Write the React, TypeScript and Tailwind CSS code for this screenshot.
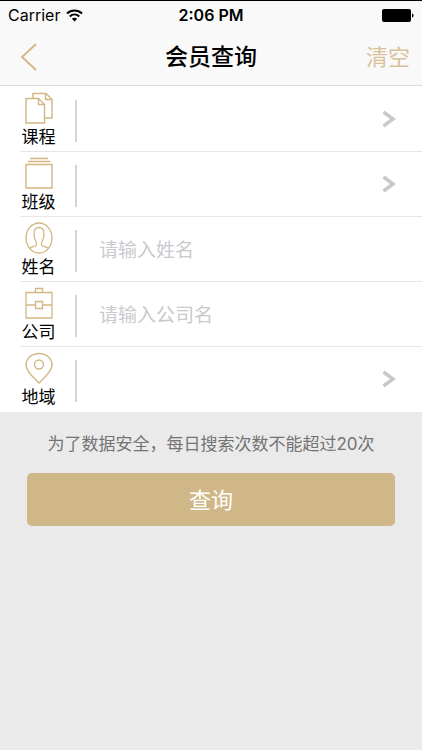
import { ReactNode, useState } from "react";

const GOLD = "#d2b684";

function CourseIcon() {
  return (
    <svg width="28" height="32" viewBox="0 0 28 32" fill="none" stroke={GOLD} strokeWidth="1.4">
      <path d="M8 6V1.5h13l6 6V26h-7.500" />
      <path d="M20.5 1.5v6h6.500" />
      <path d="M1 6.5h12.500l6 6V31H1z" />
      <path d="M13.500 6.500v6h6" />
    </svg>
  );
}

function ClassIcon() {
  return (
    <svg width="28" height="32" viewBox="0 0 28 32" fill="none" stroke={GOLD} strokeWidth="1.400">
      <path d="M5 1.500h18M3 4.500h22" />
      <path d="M1 7.500h26V31H1z" />
    </svg>
  );
}

function PersonIcon() {
  return (
    <svg width="28" height="32" viewBox="0 0 28 32" fill="none" stroke={GOLD} strokeWidth="1.300">
      <ellipse cx="14" cy="16" rx="13" ry="15" />
      <path d="M5 26.200c1.500-1.200 4.500-1.700 6-2.700.9-.8.600-2.500-.3-4.500C9.500 17 9 14.500 9 11.500 9 7.500 11 5.500 14 5.500s5 2 5 6c0 3-.5 5.500-1.700 7.500-.9 2-1.200 3.700-.3 4.500 1.500 1 4.500 1.500 6 2.700" />
    </svg>
  );
}

function CompanyIcon() {
  return (
    <svg width="28" height="32" viewBox="0 0 28 32" fill="none" stroke={GOLD} strokeWidth="1.300">
      <path d="M1 5.500h26V31H1z" />
      <path d="M10.500 5.500v-4h7v4" />
      <path d="M1 18h9.500M17.500 18H27" />
      <path d="M10.500 14.500h7v7h-7z" />
    </svg>
  );
}

function RegionIcon() {
  return (
    <svg width="28" height="32" viewBox="0 0 28 32" fill="none" stroke={GOLD} strokeWidth="1.400">
      <path d="M14 31C9 26 1 19.500 1 13.200 1 6.500 6.500 1.500 14 1.500s13 5 13 11.700C27 19.500 19 26 14 31z" />
      <circle cx="14" cy="12.500" r="4.500" />
    </svg>
  );
}

function Row({ id, label, icon, children, last }: { id: string; label: string; icon: ReactNode; children: ReactNode; last?: boolean }) {
  return (
    <div className="pl-5">
      <div className={`flex h-[65px] items-center border-b ${last ? "border-white" : "border-[#e6e6e6]"}`}>
        <label htmlFor={id} className="flex w-[37px] shrink-0 flex-col items-center gap-px pt-[3px] text-[17px] leading-6 text-black">
          {icon}
          {label}
        </label>
        <div className="ml-[18px] mt-1 h-[42px] w-0.5 shrink-0 bg-[#d5d5d5]" />
        {children}
      </div>
    </div>
  );
}

function Picker({ id }: { id: string }) {
  return (
    <div className="flex h-full min-w-0 flex-1 items-center pr-[26px]">
      <select id={id} className="h-full min-w-0 flex-1 appearance-none bg-transparent pl-[22px] text-[19px] outline-none">
        <option value=""></option>
      </select>
      <svg width="14" height="18" viewBox="0 0 14 18" fill="none" stroke="#c9c9c9" strokeWidth="3.500">
        <path d="M1.500 2l9.500 7-9.500 7" />
      </svg>
    </div>
  );
}

function TextField({ id, placeholder }: { id: string; placeholder: string }) {
  const [value, setValue] = useState("");
  return (
    <input
      id={id}
      type="text"
      value={value}
      onChange={(e) => setValue(e.target.value)}
      placeholder={placeholder}
      className="h-full min-w-0 flex-1 bg-transparent pl-[22px] pt-0.5 text-[19px] outline-none placeholder:text-[#c9c9ce]"
    />
  );
}

export default function App() {
  return (
    <div className="min-h-screen bg-[#eaeaea] font-['Inter','Noto_Sans_CJK_SC',sans-serif]">
      <header className="border-b border-t border-b-[#dcdcdc] border-t-black bg-[#f9f9f9]">
        <div className="grid h-7 grid-cols-[1fr_auto_1fr] items-center px-2 text-[16px] leading-5 text-black">
          <div className="flex items-center gap-1.5">
            <span>Carrier</span>
            <svg width="17" height="13" viewBox="0 0 17 13" fill="none" stroke="#000" strokeWidth="2">
              <path d="M1 4.500c4.300-4 10.700-4 15 0" />
              <path d="M3.700 7.400c2.800-2.500 6.800-2.500 9.600 0" />
              <path d="M5.800 9.700c1.600-1.400 3.800-1.400 5.400 0L8.500 12.500z" fill="#000" stroke="none" />
            </svg>
          </div>
          <span className="text-center font-semibold">2:06 PM</span>
          <svg className="justify-self-end" width="32" height="13" viewBox="0 0 32 13">
            <rect x="0" y="0" width="29" height="13" rx="2" fill="#000" />
            <path d="M30 4.500c2 .5 2 3.500 0 4z" fill="#000" />
          </svg>
        </div>
        <div className="grid h-14 grid-cols-[1fr_auto_1fr] items-center px-3">
          <button type="button" aria-label="返回" className="justify-self-start pl-2">
            <svg width="18" height="28" viewBox="0 0 18 28" fill="none" stroke={GOLD} strokeWidth="1.800">
              <path d="M16 1L2 14l14 13" />
            </svg>
          </button>
          <h1 className="whitespace-nowrap text-center text-[23px] font-medium leading-8 text-black">会员查询</h1>
          <button type="button" className="justify-self-end text-[22px] leading-8 text-[#d8c29a]">清空</button>
        </div>
      </header>

      <form onSubmit={(e) => e.preventDefault()}>
        <div className="bg-white pt-px">
          <Row id="course" label="课程" icon={<CourseIcon />}>
            <Picker id="course" />
          </Row>
          <Row id="class" label="班级" icon={<ClassIcon />}>
            <Picker id="class" />
          </Row>
          <Row id="name" label="姓名" icon={<PersonIcon />}>
            <TextField id="name" placeholder="请输入姓名" />
          </Row>
          <Row id="company" label="公司" icon={<CompanyIcon />}>
            <TextField id="company" placeholder="请输入公司名" />
          </Row>
          <Row id="region" label="地域" icon={<RegionIcon />} last>
            <Picker id="region" />
          </Row>
        </div>

        <div className="px-[27px] pt-5">
          <p className="whitespace-nowrap text-center text-[17px] leading-6 text-[#737373]">
            为了数据安全，每日搜索次数不能超过20次
          </p>
          <button type="submit" className="mt-[17px] h-[53px] w-full rounded-[5px] bg-[#d0b787] pt-0.5 text-[22px] text-white">
            查询
          </button>
        </div>
      </form>
    </div>
  );
}
